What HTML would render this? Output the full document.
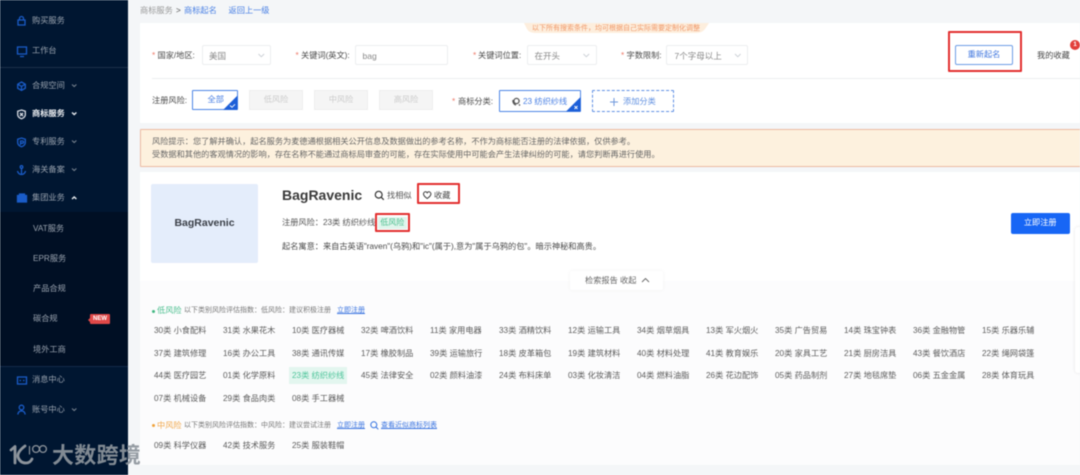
<!DOCTYPE html>
<html lang="zh-CN"><head><meta charset="utf-8"><title>商标起名</title>
<style>
html,body{margin:0;padding:0;width:1080px;height:475px;overflow:hidden;background:#f4f6f8}
body{font-family:"Liberation Sans","Noto Sans CJK SC",sans-serif;font-size:8.2px;color:#666}
#w{position:absolute;left:0;top:0;width:1080px;height:475px;overflow:hidden;filter:blur(.4px)}
.a{position:absolute;box-sizing:border-box}
.t{position:absolute;white-space:nowrap;height:16px;line-height:16px;margin-top:-8px}
.s{color:#98a2ae}
.star{color:#ee7766}
.lb{color:#4a4a4a}
.sel{position:absolute;box-sizing:border-box;height:20px;top:45px;border:1px solid #eceef0;border-radius:2px;background:#fff}
.dis{position:absolute;box-sizing:border-box;top:90px;height:20px;width:54px;background:#f5f5f5;border:1px solid #eee;color:#ccc;text-align:center;line-height:18px}
.blue{color:#4a80e4}
.c{position:absolute;white-space:nowrap;height:16px;line-height:16px;margin-top:-8px;font-size:8.2px;color:#5c5c5c}
.red{position:absolute;box-sizing:border-box;border:2px solid #e32f2f;border-radius:1px}
svg{position:absolute;overflow:visible}
</style></head><body><div id="w">
<!-- sidebar -->
<div class="a" style="left:0;top:0;width:128px;height:475px;background:#001631"></div>
<div class="a" style="left:0;top:212px;width:128px;height:154px;background:#000f24"></div>
<div class="a" style="left:0;top:67px;width:128px;height:1px;background:#1c2f49"></div>
<div class="a" style="left:0;top:366px;width:128px;height:1px;background:#13294a"></div>
<svg style="left:0;top:0" width="128" height="475" fill="none" stroke="#1a5cc8" stroke-width="1.3">
<path d="M18 20h7v5h-7zM19.500 20v-1.500a2 2 0 0 1 4 0V20"/>
<path d="M17.500 47h9v7h-9zM20 56.500h4"/>
<path d="M21.500 82l3.800 2.200v4l-3.800 2.200-3.800-2.200v-4zM17.700 84.200l3.800 2.200 3.800-2.200M21.500 86.400v4"/>
<path d="M21.500 110l3.800 1.200v3.600c0 2-2 3.300-3.800 4-1.800-.7-3.800-2-3.800-4v-3.600z" stroke="#d5dae2"/>
<path d="M20 113l3 3M23 113l-3 3" stroke="#d5dae2"/>
<path d="M21.500 138l3.800 1.200v3.600c0 2-2 3.300-3.800 4-1.800-.7-3.800-2-3.800-4v-3.600z"/>
<path d="M20.500 145v-4h2a1 1 0 0 1 0 2.200h-2"/>
<circle cx="21.500" cy="167" r="1.300"/><path d="M21.500 168v6.500M17.500 171c.3 2 2 3.500 4 3.500s3.700-1.500 4-3.500"/>
<path d="M17.500 195.500h9v6.500h-9zM19.500 195.500v-1.500h5v1.500" fill="#1a5cc8"/>
<path d="M17.500 377h9v7h-9zM19.500 380.500h1.500M23 380.500h1.500"/>
<circle cx="21.500" cy="407.500" r="2.300"/><path d="M17.800 414.500c.3-2.500 1.800-3.500 3.700-3.500s3.400 1 3.700 3.500"/>
</svg>
<svg style="left:0;top:0" width="128" height="475" fill="none" stroke-width="1.100">
<path d="M72 84.500l2.200 2 2.200-2M72 140.500l2.200 2 2.200-2M72 168.500l2.200 2 2.200-2M72 408.500l2.200 2 2.200-2" stroke="#77828f"/>
<path d="M72 112.500l2.200 2 2.200-2M72 199l2.200-2 2.200 2" stroke="#e8ecf0" stroke-width="1.400"/>
</svg>
<div class="t s" style="left:32px;top:21px">购买服务</div>
<div class="t s" style="left:32px;top:51px">工作台</div>
<div class="t s" style="left:32px;top:86px">合规空间</div>
<div class="t" style="left:32px;top:114px;color:#eef1f4;font-weight:bold">商标服务</div>
<div class="t s" style="left:32px;top:142px">专利服务</div>
<div class="t s" style="left:32px;top:170px">海关备案</div>
<div class="t s" style="left:32px;top:198px">集团业务</div>
<div class="t s" style="left:33px;top:229px">VAT服务</div>
<div class="t s" style="left:33px;top:259px">EPR服务</div>
<div class="t s" style="left:33px;top:289px">产品合规</div>
<div class="t s" style="left:33px;top:319px">碳合规</div>
<div class="t s" style="left:33px;top:350px">境外工商</div>
<div class="a" style="left:90px;top:314px;width:20px;height:10px;background:#e04848;border-radius:1px;color:#fff;font-size:6px;font-weight:bold;line-height:10px;text-align:center">NEW</div>
<div class="a" style="left:88px;top:317.500px;width:0;height:0;border:2px solid transparent;border-left:0;border-right-color:#e04848"></div>
<div class="t s" style="left:32px;top:380px">消息中心</div>
<div class="t s" style="left:32px;top:410px">账号中心</div>

<!-- breadcrumb -->
<div class="t" style="left:140px;top:11px;color:#999">商标服务</div>
<div class="t" style="left:176px;top:11px;color:#555">&gt;</div>
<div class="t blue" style="left:184px;top:11px">商标起名</div>
<div class="t blue" style="left:228.500px;top:11px">返回上一级</div>

<!-- search card -->
<div class="a" style="left:140px;top:23px;width:940px;height:100px;background:#fff"></div>
<svg style="left:524px;top:23px" width="186" height="11"><path d="M0 0H185L181 6Q178 10 172 10H12Q5 10 3 6Z" fill="#fdeedd"/></svg>
<div class="t" style="left:532px;top:29px;font-size:7px;color:#f0996a">以下所有搜索条件，均可根据自己实际需要定制化调整</div>

<div class="t star" style="left:152px;top:56px">*</div><div class="t lb" style="left:157.500px;top:56px">国家/地区:</div>
<div class="sel" style="left:202px;width:69px"></div><div class="t" style="left:209px;top:56px;color:#888;font-size:8.500px">美国</div>
<div class="t star" style="left:295.500px;top:56px">*</div><div class="t lb" style="left:301px;top:56px">关键词(英文):</div>
<div class="sel" style="left:355px;width:93px"></div><div class="t" style="left:362.500px;top:56px;color:#888;font-size:8.500px">bag</div>
<div class="t star" style="left:473px;top:56px">*</div><div class="t lb" style="left:478px;top:56px">关键词位置:</div>
<div class="sel" style="left:527px;width:70px"></div><div class="t" style="left:534.500px;top:56px;color:#888;font-size:8.500px">在开头</div>
<div class="t star" style="left:621px;top:56px">*</div><div class="t lb" style="left:626.500px;top:56px">字数限制:</div>
<div class="sel" style="left:666px;width:81.500px"></div><div class="t" style="left:674.500px;top:56px;color:#888;font-size:8.500px">7个字母以上</div>
<svg style="left:0;top:0" width="1080" height="120" fill="none" stroke="#c9ced4" stroke-width=".9"><path d="M258.500 54l2.800 2.800 2.800-2.800M583.500 54l2.800 2.800 2.800-2.800M735 54l2.800 2.800 2.800-2.800"/></svg>

<div class="red" style="left:948px;top:31px;width:74px;height:41px"></div>
<div class="a" style="left:955px;top:45px;width:58px;height:20px;border:1px solid #6e9de6;border-radius:2px;background:#fff;text-align:center;line-height:18px;color:#3d74de">重新起名</div>
<div class="t" style="left:1037px;top:56px;color:#444">我的收藏</div>
<div class="a" style="left:1070px;top:40px;width:10px;height:10px;border-radius:5px;background:#e2403b;color:#fff;font-size:6.500px;font-weight:bold;line-height:10px;text-align:center">1</div>

<div class="a" style="left:152px;top:78px;width:928px;height:1px;background:#eceeef"></div>

<div class="t lb" style="left:152px;top:100.500px">注册风险:</div>
<div class="a" style="left:192px;top:90px;width:45.500px;height:20px;border:1px solid #4d85e6;border-radius:1px;background:#fff;line-height:18px;color:#4a80e4;padding-left:14.500px">全部</div>
<svg style="left:222px;top:95px" width="16" height="15"><path d="M15.500 0.500V15H1z" fill="#1d5fd8"/><path d="M8 10.500l2 1.800 3-3" fill="none" stroke="#fff" stroke-width=".9"/></svg>
<div class="dis" style="left:249px">低风险</div>
<div class="dis" style="left:314px">中风险</div>
<div class="dis" style="left:379px">高风险</div>
<div class="t star" style="left:452px;top:101.500px">*</div><div class="t lb" style="left:458px;top:101.500px">商标分类:</div>
<div class="a" style="left:499px;top:90px;width:82px;height:22px;border:1px solid #4d85e6;border-radius:1px;background:#fff"></div>
<svg style="left:512px;top:97px" width="9" height="9" fill="none" stroke="#555" stroke-width="1.300"><circle cx="4.500" cy="4" r="2.600"/><path d="M1 3c-.5 2 .8 4.500 3 5M7 7.500l1 1"/></svg>
<div class="t" style="left:523px;top:101.500px;color:#4a80e4">23 纺织纱线</div>
<svg style="left:566px;top:97px" width="15" height="15"><path d="M14.500 0V14.500H0z" fill="#1d5fd8"/><path d="M8.500 9l3 3M11.500 9l-3 3" fill="none" stroke="#fff" stroke-width=".9"/></svg>
<div class="a" style="left:592px;top:90px;width:81.500px;height:22px;border:1px dashed #5f90e4;border-radius:1px;background:#fff"></div>
<svg style="left:609px;top:97px" width="10" height="10" fill="none" stroke="#6d97dc" stroke-width="1"><path d="M5 1v8M1 5h8"/></svg>
<div class="t blue" style="left:623px;top:101.500px;color:#5f8fe0">添加分类</div>

<!-- risk notice -->
<div class="a" style="left:140px;top:129px;width:941px;height:38px;background:#fdf1de;border:1px solid #ecbaa2;border-radius:1px"></div>
<div class="t" style="left:152px;top:142px;color:#666">风险提示：您了解并确认，起名服务为麦德通根据相关公开信息及数据做出的参考名称，不作为商标能否注册的法律依据，仅供参考。</div>
<div class="t" style="left:152px;top:154.500px;color:#666">受数据和其他的客观情况的影响，存在名称不能通过商标局审查的可能，存在实际使用中可能会产生法律纠纷的可能，请您判断再进行使用。</div>

<!-- result card -->
<div class="a" style="left:140px;top:172px;width:940px;height:109px;background:#fff"></div>
<div class="a" style="left:140px;top:281px;width:940px;height:184px;background:#fcfcfd"></div>
<div class="a" style="left:151px;top:184px;width:107px;height:79px;background:#e4edfb;border-radius:2px;text-align:center;line-height:79px;font-size:10.500px;font-weight:bold;color:#3a3f47">BagRavenic</div>
<div class="t" style="left:282px;top:195px;font-size:14px;font-weight:bold;color:#3a3a3a">BagRavenic</div>
<svg style="left:374px;top:190px" width="11" height="11" fill="none" stroke="#333" stroke-width="1.200"><circle cx="4.700" cy="4.700" r="3.400"/><path d="M7.300 7.300l2.500 2.500"/></svg>
<div class="t" style="left:387px;top:195.500px;color:#555">找相似</div>
<div class="red" style="left:417px;top:183px;width:42.500px;height:21px"></div>
<svg style="left:423px;top:191px" width="9" height="9" fill="none" stroke="#333" stroke-width="1"><path d="M4.200 7.500C2 6 .5 4.600.5 3 .5 1.700 1.500.8 2.500.8c.8 0 1.400.4 1.700 1 .3-.6 1-1 1.700-1 1 0 2 .9 2 2.200 0 1.600-1.500 3-3.700 4.500z"/></svg>
<div class="t" style="left:434px;top:195.500px;color:#444">收藏</div>
<div class="t" style="left:282px;top:223px;color:#555">注册风险：23类 纺织纱线</div>
<div class="a" style="left:378px;top:217px;width:28.500px;height:12px;background:#e0f5ec;color:#4cbf8f;font-size:8px;line-height:12px;text-align:center">低风险</div>
<div class="red" style="left:375px;top:213px;width:34.500px;height:19px"></div>
<div class="t" style="left:282px;top:246.500px;color:#4a4a4a">起名寓意：来自古英语"raven"(乌鸦)和"ic"(属于),意为"属于乌鸦的包"。暗示神秘和高贵。</div>
<div class="a" style="left:1011px;top:213px;width:58.500px;height:20.500px;background:#1766f5;border-radius:2px;color:#fff;text-align:center;line-height:20px">立即注册</div>
<div class="a" style="left:1075px;top:227px;width:10px;height:146px;background:#fff;border-radius:3px;box-shadow:0 0 3px rgba(0,0,0,.1)"></div>
<div class="a" style="left:570px;top:271px;width:93px;height:19px;background:#fff;border-radius:2px;box-shadow:0 0 4px rgba(0,0,0,.05)"></div>
<div class="t" style="left:585px;top:280.500px;color:#666">检索报告 收起</div>
<svg style="left:641px;top:277px" width="10" height="7" fill="none" stroke="#666" stroke-width=".9"><path d="M1 5l3.500-3.500L8 5"/></svg>

<!-- low risk -->
<div class="a" style="left:152px;top:309.500px;width:3px;height:3px;border-radius:50%;background:#43b883"></div>
<div class="t" style="left:157px;top:311px;color:#4cbf8f">低风险</div>
<div class="t" style="left:184px;top:311px;font-size:7px;color:#777">以下类别风险评估指数：低风险：建议积极注册</div>
<div class="t" style="left:337px;top:311px;font-size:7px;color:#3a74e0;text-decoration:underline">立即注册</div>

<div class="c" style="left:154px;top:330.500px">30类 小食配料</div><div class="c" style="left:223px;top:330.500px">31类 水果花木</div><div class="c" style="left:292px;top:330.500px">10类 医疗器械</div><div class="c" style="left:361px;top:330.500px">32类 啤酒饮料</div><div class="c" style="left:430px;top:330.500px">11类 家用电器</div><div class="c" style="left:499px;top:330.500px">33类 酒精饮料</div><div class="c" style="left:568px;top:330.500px">12类 运输工具</div><div class="c" style="left:637px;top:330.500px">34类 烟草烟具</div><div class="c" style="left:706px;top:330.500px">13类 军火烟火</div><div class="c" style="left:775px;top:330.500px">35类 广告贸易</div><div class="c" style="left:844px;top:330.500px">14类 珠宝钟表</div><div class="c" style="left:913px;top:330.500px">36类 金融物管</div><div class="c" style="left:982px;top:330.500px">15类 乐器乐辅</div>

<div class="c" style="left:154px;top:353.500px">37类 建筑修理</div><div class="c" style="left:223px;top:353.500px">16类 办公工具</div><div class="c" style="left:292px;top:353.500px">38类 通讯传媒</div><div class="c" style="left:361px;top:353.500px">17类 橡胶制品</div><div class="c" style="left:430px;top:353.500px">39类 运输旅行</div><div class="c" style="left:499px;top:353.500px">18类 皮革箱包</div><div class="c" style="left:568px;top:353.500px">19类 建筑材料</div><div class="c" style="left:637px;top:353.500px">40类 材料处理</div><div class="c" style="left:706px;top:353.500px">41类 教育娱乐</div><div class="c" style="left:775px;top:353.500px">20类 家具工艺</div><div class="c" style="left:844px;top:353.500px">21类 厨房洁具</div><div class="c" style="left:913px;top:353.500px">43类 餐饮酒店</div><div class="c" style="left:982px;top:353.500px">22类 绳网袋篷</div>

<div class="a" style="left:289px;top:367px;width:58px;height:17px;background:#e3f6ef"></div>
<div class="c" style="left:154px;top:376px">44类 医疗园艺</div><div class="c" style="left:223px;top:376px">01类 化学原料</div><div class="c" style="left:292px;top:376px;color:#4dc49a">23类 纺织纱线</div><div class="c" style="left:361px;top:376px">45类 法律安全</div><div class="c" style="left:430px;top:376px">02类 颜料油漆</div><div class="c" style="left:499px;top:376px">24类 布料床单</div><div class="c" style="left:568px;top:376px">03类 化妆清洁</div><div class="c" style="left:637px;top:376px">04类 燃料油脂</div><div class="c" style="left:706px;top:376px">26类 花边配饰</div><div class="c" style="left:775px;top:376px">05类 药品制剂</div><div class="c" style="left:844px;top:376px">27类 地毯席垫</div><div class="c" style="left:913px;top:376px">06类 五金金属</div><div class="c" style="left:982px;top:376px">28类 体育玩具</div>

<div class="c" style="left:154px;top:398.500px">07类 机械设备</div><div class="c" style="left:223px;top:398.500px">29类 食品肉类</div><div class="c" style="left:292px;top:398.500px">08类 手工器械</div>

<!-- mid risk -->
<div class="a" style="left:152px;top:424px;width:3px;height:3px;border-radius:50%;background:#f0a33c"></div>
<div class="t" style="left:157px;top:425.500px;color:#f2a94e">中风险</div>
<div class="t" style="left:184px;top:425.500px;font-size:7px;color:#777">以下类别风险评估指数：中风险：建议尝试注册</div>
<div class="t" style="left:337px;top:425.500px;font-size:7px;color:#3a74e0;text-decoration:underline">立即注册</div>
<svg style="left:370px;top:421px" width="9" height="9" fill="none" stroke="#2f6fe0" stroke-width="1"><circle cx="3.800" cy="3.800" r="3"/><path d="M6 6l2.300 2.300"/></svg>
<div class="t" style="left:381px;top:425.500px;font-size:7px;color:#3a74e0;text-decoration:underline">查看近似商标列表</div>
<div class="c" style="left:154px;top:445.500px">09类 科学仪器</div><div class="c" style="left:223px;top:445.500px">42类 技术服务</div><div class="c" style="left:292px;top:445.500px">25类 服装鞋帽</div>

<!-- watermark -->
<svg style="left:0;top:430px" width="60" height="45" fill="none" stroke="#8d949c" stroke-width="2.800" stroke-linecap="round">
<path d="M15 17V33M11 20l4-3.500"/>
<path d="M25 16Q17 22 18 27Q20 33 26 33Q30 33 32 29"/>
<path d="M29.500 16.500V24" stroke-width="1.200"/>
<circle cx="36" cy="19" r="3.400" stroke-width="1.300"/><circle cx="43" cy="19" r="3.400" stroke-width="1.300"/>
</svg>
<div class="a" style="left:52px;top:443px;height:26px;line-height:26px;font-size:22px;font-weight:bold;color:#8d949c;white-space:nowrap;letter-spacing:.3px;opacity:.92">大数跨境</div>
</div></body></html>
